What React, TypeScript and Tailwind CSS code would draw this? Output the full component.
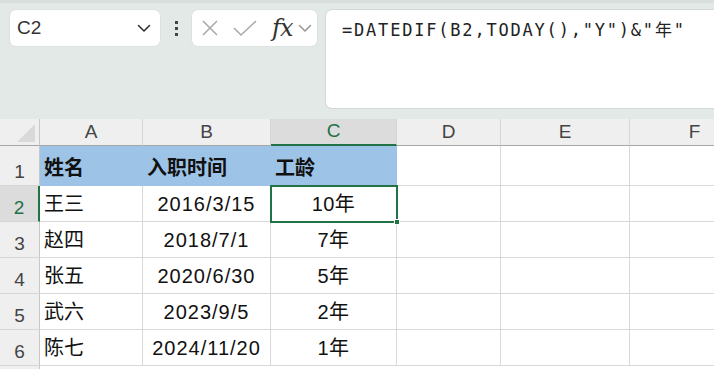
import React from "react"

const cols = [
  { key: "A", w: 103 },
  { key: "B", w: 128 },
  { key: "C", w: 126 },
  { key: "D", w: 104 },
  { key: "E", w: 129 },
  { key: "F", w: 130 },
]

const rows = [
  { n: 2, name: "王三", date: "2016/3/15", age: "10年" },
  { n: 3, name: "赵四", date: "2018/7/1", age: "7年" },
  { n: 4, name: "张五", date: "2020/6/30", age: "5年" },
  { n: 5, name: "武六", date: "2023/9/5", age: "2年" },
  { n: 6, name: "陈七", date: "2024/11/20", age: "1年" },
]

const cjk = "font-['Liberation_Sans','Noto_Sans_CJK_SC',sans-serif]"

function Chevron({ className }: { className?: string }) {
  return (
    <svg width="14" height="9" viewBox="0 0 14 9" className={className} fill="none">
      <path d="M1.5 1.5 L7 7 L12.5 1.5" stroke="currentColor" strokeWidth="1.6" strokeLinecap="round" strokeLinejoin="round" />
    </svg>
  )
}

function FormulaBar() {
  return (
    <div className="relative h-[119px] bg-[#e3e9e7] border-t-[3px] border-[#d9dfdd]">
      <div className="flex items-start pt-[7px] pl-[10px]">
        {/* name box */}
        <div className="flex h-[36px] w-[150px] items-center justify-between rounded-[6px] bg-white pl-[7px] pr-[9px] shadow-[0_0_0_1px_#dde3e1]">
          <span className={`${cjk} text-[19px] text-[#333]`}>C2</span>
          <Chevron className="text-[#333]" />
        </div>
        <div className="flex h-[36px] w-[32px] flex-col items-center justify-center gap-[3px]">
          <span className="h-[3px] w-[3px] bg-[#444]" />
          <span className="h-[3px] w-[3px] bg-[#444]" />
          <span className="h-[3px] w-[3px] bg-[#444]" />
        </div>
        {/* cancel / enter / fx */}
        <div className="flex h-[36px] w-[125px] items-center rounded-[6px] bg-white pl-[9px] shadow-[0_0_0_1px_#dde3e1]">
          <svg width="18" height="18" viewBox="0 0 18 18">
            <path d="M2 2 L16 16 M16 2 L2 16" stroke="#a8a8a8" strokeWidth="1.5" />
          </svg>
          <svg width="26" height="18" viewBox="0 0 26 18" className="ml-[13px]">
            <path d="M2 9 L9 16 L24 2" stroke="#a8a8a8" strokeWidth="1.5" fill="none" />
          </svg>
          <span className="ml-[14px] font-['DejaVu_Serif','Liberation_Serif',serif] text-[24px] italic leading-none tracking-[-1px] text-[#333]">
            fx
          </span>
          <Chevron className="ml-[6px] text-[#999]" />
        </div>
        {/* formula input */}
        <div className="ml-[9px] h-[98px] flex-1 rounded-l-[6px] bg-white pl-[16px] pt-[8px] shadow-[0_0_0_1px_#d3d9d7]">
          <span className="font-['DejaVu_Sans_Mono','Noto_Sans_CJK_SC',monospace] text-[17px] tracking-[1.8px] text-[#222]">
            =DATEDIF(B2,TODAY(),"Y")&"年"
          </span>
        </div>
      </div>
    </div>
  )
}

function ColumnHeaders() {
  return (
    <div className="flex h-[27px] bg-[#efefef]">
      <div className="relative w-[40px] shrink-0 border-r border-b border-[#c8c8c8] border-b-[#a6a6a6]">
        <svg width="20" height="20" viewBox="0 0 20 20" className="absolute right-[3px] bottom-[2px]">
          <path d="M19 1 L19 19 L1 19 Z" fill="#d9d9d9" />
        </svg>
      </div>
      {cols.map((c) => {
        const sel = c.key === "C"
        return (
          <div
            key={c.key}
            style={{ width: c.w }}
            className={`flex shrink-0 items-center justify-center border-r border-[#d6d6d6] ${
              sel ? "border-b-2 border-b-[#217346] bg-[#dcdcdc] text-[#1e7145]" : "border-b border-b-[#a6a6a6] text-[#444]"
            } ${cjk} text-[19px]`}
          >
            {c.key}
          </div>
        )
      })}
    </div>
  )
}

function RowHeader({ n, h, sel }: { n?: number; h: number; sel?: boolean }) {
  return (
    <div
      style={{ height: h }}
      className={`flex w-[40px] shrink-0 items-end justify-center pb-[1px] border-b border-[#d6d6d6] ${
        sel ? "border-r-2 border-r-[#217346] bg-[#dcdcdc] text-[#1e7145]" : "border-r border-r-[#c8c8c8] bg-[#efefef] text-[#444]"
      } ${cjk} text-[19px] leading-[24px]`}
    >
      {n}
    </div>
  )
}

function Cell({
  w,
  children,
  align = "left",
  className = "",
}: {
  w: number
  children?: React.ReactNode
  align?: "left" | "center"
  className?: string
}) {
  return (
    <div
      style={{ width: w }}
      className={`flex shrink-0 items-end pb-[4px] border-r border-b border-[#d9d9d9] ${
        align === "center" ? "justify-center" : "justify-start pl-[4px]"
      } ${cjk} text-[20px] leading-[26px] text-[#111] ${className}`}
    >
      {children}
    </div>
  )
}

export default function App() {
  return (
    <div className="h-[369px] w-[714px] overflow-hidden bg-white">
      <FormulaBar />
      <ColumnHeaders />

      {/* row 1: header fill */}
      <div className="flex h-[40px]">
        <RowHeader n={1} h={40} />
        <div className="flex w-[357px] shrink-0 items-end bg-[#9dc3e6] pb-[6px] font-['Noto_Sans_CJK_SC',sans-serif] text-[20px] font-bold leading-[26px] text-[#111]">
          <span className="w-[103px] pl-[4px]">姓名</span>
          <span className="w-[128px] pl-[4px]">入职时间</span>
          <span className="w-[126px] pl-[4px]">工龄</span>
        </div>
        <Cell w={104} />
        <Cell w={129} />
        <Cell w={130} />
      </div>

      {rows.map((r) => {
        const sel = r.n === 2
        return (
          <div key={r.n} className="flex h-[36px]">
            <RowHeader n={r.n} h={36} sel={sel} />
            <Cell w={103}>{r.name}</Cell>
            <Cell w={128} align="center" className="tracking-[1px]">
              {r.date}
            </Cell>
            <Cell
              w={126}
              align="center"
              className={sel ? "relative outline-2 outline-[#217346] -outline-offset-1 tracking-[0.5px]" : "tracking-[0.5px]"}
            >
              {r.age}
              {sel && <span className="absolute -right-[4px] -bottom-[4px] z-10 h-[6px] w-[6px] border border-white bg-[#217346]" />}
            </Cell>
            <Cell w={104} />
            <Cell w={129} />
            <Cell w={130} />
          </div>
        )
      })}

      {/* top edge of row 7, cut by the window */}
      <div className="flex h-[36px]">
        <RowHeader h={36} />
      </div>
    </div>
  )
}
